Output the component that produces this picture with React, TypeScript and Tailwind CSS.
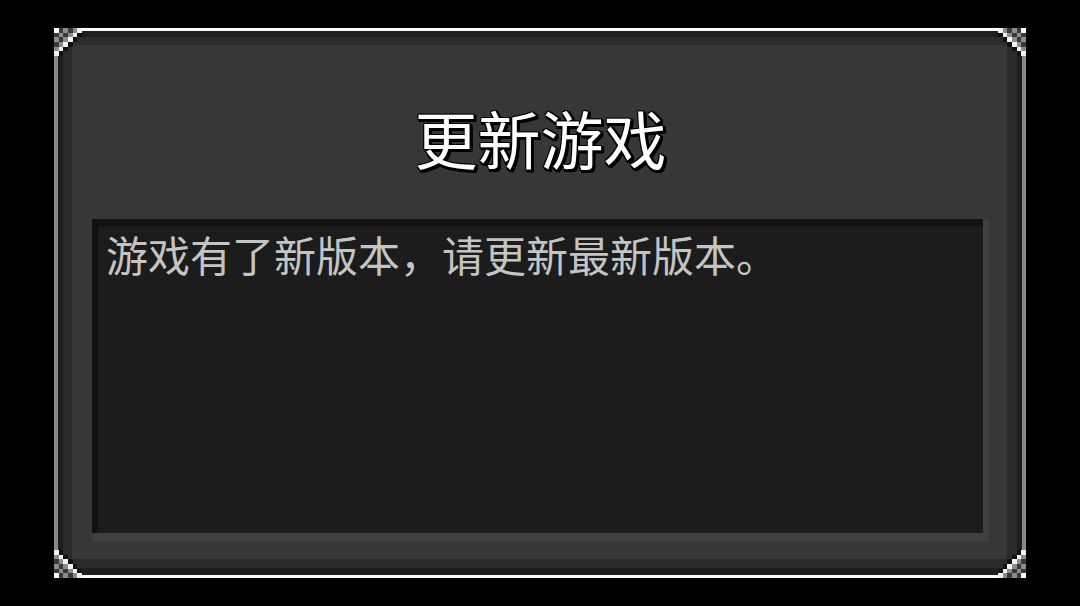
import React from "react";

function Corner({ className }: { className: string }) {
  const cells: React.ReactElement[] = [];
  for (let r = 0; r < 6; r++) {
    for (let c = 0; c < 6; c++) {
      const s = r + c;
      let fill: string | null = null;
      if (r === 0 && c === 0) fill = "#ffffff";
      else if (s < 5) fill = s % 2 === 0 ? "#8c8c8c" : "#3a3a3a";
      else if (s === 5) fill = "#f2f2f2";
      else if (s === 6) fill = "#111111";
      if (fill) cells.push(<rect key={`${r}-${c}`} x={c} y={r} width={1} height={1} fill={fill} />);
    }
  }
  return (
    <svg
      className={className}
      width={28}
      height={28}
      viewBox="0 0 6 6"
      shapeRendering="crispEdges"
    >
      {cells}
    </svg>
  );
}

export default function App() {
  return (
    <div className="w-[1080px] h-[606px] bg-black pt-[28px] pl-[54px] font-['Noto_Sans_CJK_SC','Noto_Sans',sans-serif]">
      <div className="relative w-[972px] h-[550px] border-t-[3px] border-b-[3px] border-x-[4px] border-t-white border-b-white border-x-[#8a8a8a] bg-black">
        <div className="h-full border-t-[6px] border-b-[7px] border-x-[5px] border-[#1f1f1f]">
          <div className="h-full border-t-[8px] border-b-[9px] border-l-[9px] border-r-[10px] border-[#2b2b2b]">
            <div className="h-full bg-[#373737] flex flex-col pt-[60px] pl-[20px] pr-[18px] pb-[17px]">
              <div className="h-[63px] text-[63px] leading-none text-white text-center [text-shadow:-1px_-1px_0_#000,1px_-1px_0_#000,-1px_1px_0_#000,1px_1px_0_#000,2px_2px_0_#000,3px_3px_0_#000,2px_3px_0_#000,3px_2px_0_#000,0_3px_0_#000,3px_0_0_#000]">
                更新游戏
              </div>
              <div className="mt-[51px] flex-1 flex flex-col bg-[#404040] pr-[6px] pb-[9px]">
                <div className="flex-1 bg-[#1c1c1c] border-t-[7px] border-l-[6px] border-[#111111] pt-[7px] pl-[8px]">
                  <p className="text-[42px] leading-none text-[#c4c4c4] whitespace-nowrap">
                    游戏有了新版本，请更新最新版本。
                  </p>
                </div>
              </div>
            </div>
          </div>
        </div>
        <Corner className="absolute -top-[3px] -left-[4px]" />
        <Corner className="absolute -top-[3px] -right-[4px] rotate-90" />
        <Corner className="absolute -bottom-[3px] -right-[4px] rotate-180" />
        <Corner className="absolute -bottom-[3px] -left-[4px] -rotate-90" />
      </div>
    </div>
  );
}
